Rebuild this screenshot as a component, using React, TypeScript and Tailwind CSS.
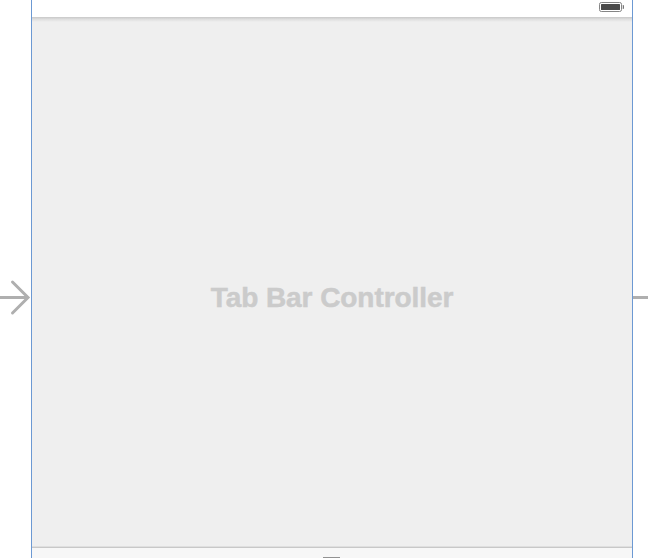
export default function App() {
  return (
    <div className="flex h-[558px] w-[648px] overflow-hidden bg-white">
      <div className="flex w-[31px] items-start pt-[278px]">
        <svg width="31" height="40" viewBox="0 0 31 40" fill="none" stroke="#afafaf" strokeWidth="3">
          <path d="M0 19.5H28" />
          <path d="M12.5 4L28 19.5L12.5 35" strokeLinecap="round" />
        </svg>
      </div>
      <main className="flex w-[602px] flex-col border-x border-[#6c99d3] bg-[#efefef]">
        <header className="flex h-[17px] shrink-0 justify-end bg-white pt-[2px] pr-[8px]">
          <svg width="25" height="10" viewBox="0 0 25 10">
            <rect x="0.5" y="0.5" width="22" height="9" rx="1.8" fill="white" stroke="#858585" />
            <rect x="2" y="2" width="19" height="6" rx="0.5" fill="#4b4b4b" />
            <path d="M24 3C25.3 3.8 25.3 6.2 24 7Z" fill="#666666" stroke="#777777" strokeWidth=".5" />
          </svg>
        </header>
        <div className="h-[5px] shrink-0 bg-linear-to-b from-[#c8c8c8] via-[#e0e0e0] to-[#efefef]" />
        <section className="flex h-[524px] shrink-0 justify-center pt-[260px]">
          <h1 className="font-['Liberation_Sans',Arial,sans-serif] text-[28px] leading-[32px] font-bold tracking-[-0.06px] whitespace-nowrap text-[#cbcbcb] [-webkit-text-stroke:0.5px_#cbcbcb]">
            Tab Bar Controller
          </h1>
        </section>
        <footer className="flex h-[12px] shrink-0 flex-col items-center bg-[#f7f7f7]">
          <div className="h-px w-full bg-[#dfdfdf]" />
          <div className="h-px w-full bg-[#c8c8c8]" />
          <div className="mt-auto mr-px h-px w-[17px] bg-[#929292]" />
        </footer>
      </main>
      <div className="flex w-[15px] pt-[296px]">
        <div className="h-[3px] w-full bg-[#afafaf]" />
      </div>
    </div>
  );
}
